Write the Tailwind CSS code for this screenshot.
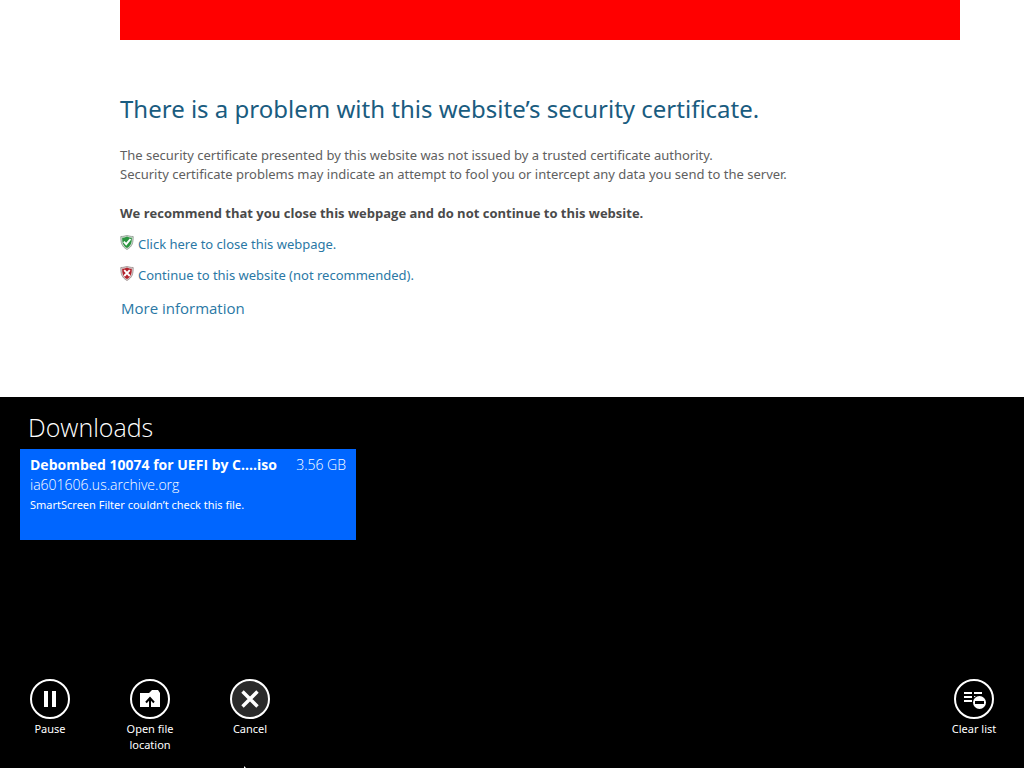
<!DOCTYPE html>
<html lang="en">

<head>
  <meta charset="UTF-8">
  <meta name="viewport" content="width=device-width, initial-scale=1.0">
  <script src="https://cdn.jsdelivr.net/npm/@tailwindcss/browser@4"></script>
  <title>Certificate Error</title>
</head>

<body class="min-h-screen flex flex-col bg-white font-['Open_Sans','Noto_Sans',sans-serif]">
  <main class="pl-[120px] pr-16 pb-[77px] text-[13px] text-[#606060] font-['Noto_Sans','Open_Sans',sans-serif]">
    <div class="h-10 bg-[#ff0000]"></div>

    <h1 class="mt-[51px] text-2xl leading-9 text-[#1a5c80]">There is a problem with this website’s security certificate.</h1>

    <p class="mt-[19px] leading-[19px]">
      The security certificate presented by this website was not issued by a trusted certificate authority.<br>
      Security certificate problems may indicate an attempt to fool you or intercept any data you send to the server.
    </p>
    <p class="mt-5 leading-[19px] font-bold text-[#4a4a4a] font-['Open_Sans','Noto_Sans',sans-serif]">We recommend that you close this webpage and do not continue to this website.</p>

    <ul class="mt-3 flex flex-col gap-3 leading-[19px] text-[#2a78a5]">
      <li>
        <a href="#" class="flex items-start gap-1 hover:underline">
          <svg class="w-[14px] h-4" viewBox="0 0 14 16">
            <path d="M7 0C5.200 1.200 3 1.500 .8 1.500c0 6 .7 10 6.200 13C12.500 11.500 13.200 7.500 13.200 1.500 11 1.500 8.800 1.200 7 0z" fill="#cfd9cf" stroke="#86958a" stroke-width=".8" />
            <path d="M7 1.500C5.500 2.400 4 2.700 2.200 2.800c0 5 .9 8 4.800 10.300 3.900-2.300 4.800-5.300 4.800-10.300C10 2.700 8.500 2.400 7 1.500z" fill="#2b9540" />
            <path d="M3.800 6.600l2.400 2.600 4.300-5.200" fill="none" stroke="#fff" stroke-width="1.900" />
          </svg>
          Click here to close this webpage.
        </a>
      </li>
      <li>
        <a href="#" class="flex items-start gap-1 hover:underline">
          <svg class="w-[14px] h-4" viewBox="0 0 14 16">
            <path d="M7 0C5.200 1.200 3 1.500 .8 1.500c0 6 .7 10 6.200 13C12.500 11.500 13.200 7.500 13.200 1.500 11 1.500 8.800 1.200 7 0z" fill="#d9cfcf" stroke="#958686" stroke-width=".8" />
            <path d="M7 1.500C5.500 2.400 4 2.700 2.200 2.800c0 5 .9 8 4.800 10.300 3.900-2.300 4.800-5.300 4.800-10.300C10 2.700 8.500 2.400 7 1.500z" fill="#b3222c" />
            <path d="M4.200 4.200l5.600 5.800M9.800 4.200l-5.600 5.800" fill="none" stroke="#fff" stroke-width="1.900" />
          </svg>
          Continue to this website (not recommended).
        </a>
      </li>
    </ul>

    <a href="#" class="mt-[11px] ml-px block w-fit text-[15px] leading-6 text-[#2a78a5] font-['Open_Sans','Noto_Sans',sans-serif] hover:underline">More information</a>
  </main>

  <section class="relative flex-1 flex flex-col bg-black text-white pt-3">
    <h2 class="pl-7 text-[25px] leading-9 font-light">Downloads</h2>

    <article class="mt-1 ml-5 w-[336px] min-h-[91px] bg-[#0066ff] px-[10px] py-[6px]">
      <div class="flex justify-between text-sm leading-5">
        <h3 class="font-bold">Debombed 10074 for UEFI by C....iso</h3>
        <span class="font-light">3.56 GB</span>
      </div>
      <p class="text-sm leading-5 font-light">ia601606.us.archive.org</p>
      <p class="text-[11px] leading-5 font-['Noto_Sans','Open_Sans',sans-serif]">SmartScreen Filter couldn’t check this file.</p>
    </article>

    <!-- app bar -->
    <div class="mt-auto flex justify-between pb-[15px] text-[11px] leading-4 font-['Noto_Sans','Open_Sans',sans-serif]">
      <div class="flex">
        <button type="button" class="w-[100px] flex flex-col items-center gap-[2px]">
          <svg class="w-10 h-10" viewBox="0 0 40 40">
            <circle cx="20" cy="20" r="19" fill="none" stroke="#fff" stroke-width="2" />
            <path d="M14 12h4v16h-4zM22 12h4v16h-4z" fill="#fff" />
          </svg>
          Pause
        </button>
        <button type="button" class="w-[100px] px-5 flex flex-col items-center gap-[2px]">
          <svg class="w-10 h-10" viewBox="0 0 40 40">
            <circle cx="20" cy="20" r="19" fill="none" stroke="#fff" stroke-width="2" />
            <path d="M10 14h9l3-3h6l2 3v14H10z" fill="#fff" />
            <path d="M20 28v-8M16 23.500l4-4.500 4 4.500" fill="none" stroke="#000" stroke-width="2" />
          </svg>
          Open file location
        </button>
        <button type="button" class="w-[100px] flex flex-col items-center gap-[2px]">
          <svg class="w-10 h-10" viewBox="0 0 40 40">
            <circle cx="20" cy="20" r="19" fill="#2b2b2b" stroke="#fff" stroke-width="2" />
            <path d="M12.500 12.500l15 15M27.500 12.500l-15 15" stroke="#fff" stroke-width="3.400" />
          </svg>
          Cancel
        </button>
      </div>
      <button type="button" class="w-[100px] flex flex-col items-center gap-[2px]">
        <svg class="w-10 h-10" viewBox="0 0 40 40">
          <circle cx="20" cy="20" r="19" fill="none" stroke="#fff" stroke-width="2" />
          <path d="M10 14h8M20 14h8M10 18h8M20 18h5M10 22h8" stroke="#fff" stroke-width="2" />
          <circle cx="25.500" cy="23.500" r="7.500" fill="#000" />
          <circle cx="25.500" cy="23.500" r="6.500" fill="#fff" />
          <path d="M21 23.500h9" stroke="#000" stroke-width="3" />
        </svg>
        Clear list
      </button>
    </div>

    <!-- tip of the mouse pointer -->
    <svg class="absolute bottom-0 left-[244px] w-[2px] h-[2px]" viewBox="0 0 2 2">
      <path d="M0 0l2 2H0z" fill="#fff" />
    </svg>
  </section>
</body>

</html>
